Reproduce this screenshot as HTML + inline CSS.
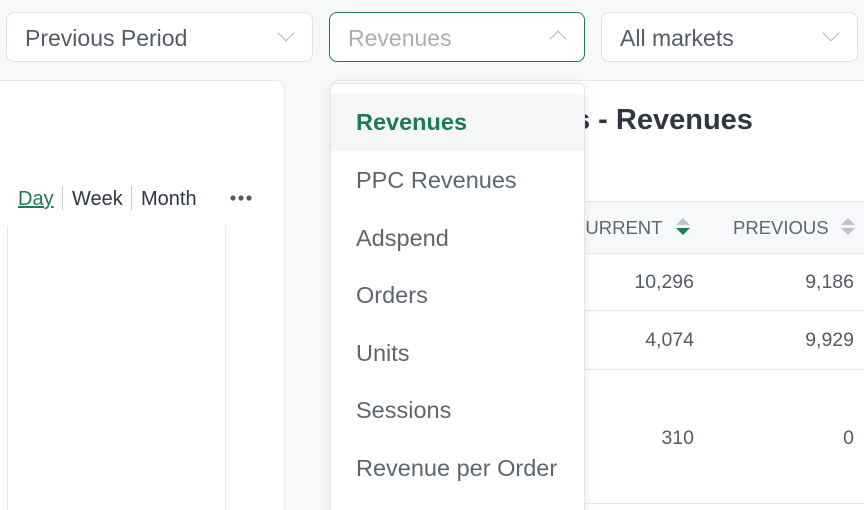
<!DOCTYPE html>
<html><head><style>
html,body{margin:0;width:864px;height:510px;overflow:hidden}
body{background:#f7f8fa;font-family:"Liberation Sans",sans-serif;position:relative}
.sel{position:absolute;top:12px;height:50px;border:1px solid #dfe1e6;border-radius:8px;background:#fff;box-sizing:border-box;font-size:23px;color:#555b66;padding:12px 18px}
.chev{position:absolute;right:20px;width:11px;height:11px;border-right:1.3px solid #b5b9c0;border-bottom:1.3px solid #b5b9c0;transform:rotate(45deg)}
.abs{position:absolute}
.card{position:absolute;background:#fff;border:1px solid #e6e8ec}
.num{position:absolute;font-size:19.5px;color:#555b66;text-align:right}
.item{position:absolute;left:25px;font-size:23.5px;color:#5f6570}
</style></head><body>
<div class="sel" style="left:6px;width:307px">Previous Period<div class="chev" style="top:14px"></div></div>
<div class="sel" style="left:329px;width:256px;border:1.5px solid #1d7a55;color:#a9adb5">Revenues<div class="chev" style="transform:rotate(225deg);top:20px"></div></div>
<div class="sel" style="left:601px;width:257px">All markets<div class="chev" style="top:14px"></div></div>

<div class="card" style="left:-2px;top:80px;width:285px;height:440px;border-radius:0 10px 0 0"></div>
<div class="abs" style="left:18px;top:188px;font-size:20px;color:#1d7a55;text-decoration:underline">Day</div>
<div class="abs" style="left:62px;top:186px;width:1px;height:24px;background:#c5c8ce"></div>
<div class="abs" style="left:72px;top:188px;font-size:20px;color:#2f3542">Week</div>
<div class="abs" style="left:131px;top:186px;width:1px;height:24px;background:#c5c8ce"></div>
<div class="abs" style="left:141px;top:188px;font-size:20px;color:#2f3542">Month</div>
<svg class="abs" style="left:229px;top:194px" width="24" height="8"><circle cx="4" cy="4" r="2.6" fill="#555b66"/><circle cx="12" cy="4" r="2.6" fill="#555b66"/><circle cx="20" cy="4" r="2.6" fill="#555b66"/></svg>
<div class="abs" style="left:7px;top:226px;width:1px;height:284px;background:#e6e8ec"></div>
<div class="abs" style="left:225px;top:226px;width:1px;height:284px;background:#e6e8ec"></div>

<div class="card" style="left:330px;top:80px;width:600px;height:440px;border-radius:10px 0 0 0;border-right:none"></div>
<div class="abs" style="left:574px;top:104px;font-size:29px;font-weight:bold;color:#2f3542">s - Revenues</div>
<div class="abs" style="left:331px;top:201px;width:533px;height:51px;background:#f7f8fa;border-top:1px solid #e6e8ec;border-bottom:1px solid #e6e8ec"></div>
<div class="abs" style="left:572px;top:217px;font-size:18.5px;color:#5f6570">CURRENT</div>
<svg class="abs" style="left:674px;top:217px" width="18" height="20"><path d="M2 8 L9 1 L16 8Z" fill="#c0c4ca"/><path d="M2 11 L9 18 L16 11Z" fill="#1d7a55"/></svg>
<div class="abs" style="left:733px;top:217px;font-size:18.5px;color:#5f6570">PREVIOUS</div>
<svg class="abs" style="left:839px;top:217px" width="18" height="20"><path d="M2 8 L9 1 L16 8Z" fill="#c0c4ca"/><path d="M2 11 L9 18 L16 11Z" fill="#c0c4ca"/></svg>
<div class="abs" style="left:331px;right:0;top:310px;height:1px;background:#e6e8ec"></div>
<div class="abs" style="left:331px;right:0;top:369px;height:1px;background:#e6e8ec"></div>
<div class="abs" style="left:331px;right:0;top:503px;height:1px;background:#e6e8ec"></div>
<div class="num" style="right:170px;top:271px">10,296</div>
<div class="num" style="right:10px;top:271px">9,186</div>
<div class="num" style="right:170px;top:329px">4,074</div>
<div class="num" style="right:10px;top:329px">9,929</div>
<div class="num" style="right:170px;top:427px">310</div>
<div class="num" style="right:10px;top:427px">0</div>

<div class="abs" style="left:330px;top:83px;width:253px;height:440px;background:#fff;border:1px solid #e3e5ea;border-radius:6px;box-shadow:0 2px 12px rgba(0,0,0,0.08)">
<div class="abs" style="left:0;right:0;top:10px;height:57px;background:#f5f6f8"></div>
<div class="item" style="top:25px;font-weight:bold;color:#1d7a55">Revenues</div>
<div class="item" style="top:83px">PPC Revenues</div>
<div class="item" style="top:141px">Adspend</div>
<div class="item" style="top:198px">Orders</div>
<div class="item" style="top:256px">Units</div>
<div class="item" style="top:313px">Sessions</div>
<div class="item" style="top:371px">Revenue per Order</div>
</div>
</body></html>
